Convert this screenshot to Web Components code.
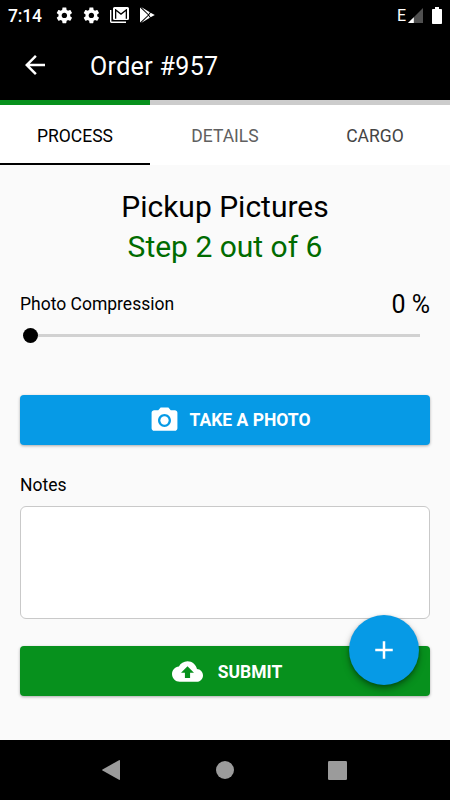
<!DOCTYPE html>
<html lang="en">
<head>
<meta charset="utf-8">
<title>Order #957</title>
<style>
html,body{margin:0;height:100%;background:#fafafa}
body{font-family:Roboto,"Liberation Sans",sans-serif;color:#000}
</style>
</head>
<body>
<order-screen></order-screen>
<script>
const define = (name, html, setup) => customElements.define(name, class extends HTMLElement {
  constructor() {
    super();
    this.attachShadow({ mode: 'open' }).innerHTML = html;
  }
  connectedCallback() { if (setup) setup(this, this.shadowRoot); }
});

const ICONS = {
  gear: ['0 0 24 24', '<path d="M19.43 12.98c.04-.32.07-.64.07-.98s-.03-.66-.07-.98l2.11-1.65c.19-.15.24-.42.12-.64l-2-3.46c-.12-.22-.39-.3-.61-.22l-2.49 1c-.52-.4-1.08-.73-1.69-.98l-.38-2.65C14.46 2.18 14.25 2 14 2h-4c-.25 0-.46.18-.49.42l-.38 2.65c-.61.25-1.17.59-1.69.98l-2.49-1c-.23-.09-.49 0-.61.22l-2 3.46c-.13.22-.07.49.12.64l2.11 1.65c-.04.32-.07.65-.07.98s.03.66.07.98l-2.11 1.65c-.19.15-.24.42-.12.64l2 3.46c.12.22.39.3.61.22l2.49-1c.52.4 1.08.73 1.69.98l.38 2.65c.03.24.24.42.49.42h4c.25 0 .46-.18.49-.42l.38-2.65c.61-.25 1.17-.59 1.69-.98l2.49 1c.23.09.49 0 .61-.22l2-3.46c.12-.22.07-.49-.12-.64l-2.11-1.65zM12 15.5c-1.93 0-3.5-1.57-3.5-3.5s1.57-3.5 3.5-3.5 3.5 1.57 3.5 3.5-1.57 3.5-3.5 3.5z"/>'],
  mail: ['0 0 20 16', '<path d="M0 3h1.4v11.6H16V16H1.4Q0 16 0 14.6z"/><path fill-rule="evenodd" d="M4.500 0h13Q19 0 19 1.500v10.300q0 1.300-1.500 1.300h-13Q3 13.100 3 11.800V1.500Q3 0 4.500 0zM5 2v9.700h1.300V4.200L11 8l4.700-3.800v7.500H17V2h-.6L11 6.200 5.600 2z"/>'],
  play: ['0 0 15 16', '<path d="M0 .4 8 8 0 15.600z"/><path d="M1.100 0 9.900 5.200 8.500 7.200zM1.100 16l8.800-5.200-1.400-2zM10.600 5.800 14.800 8l-4.200 2.200L9.100 8z"/>'],
  signal: ['0 0 15 15', '<path d="M0 15 15 0v15z" fill="#505050"/><path d="M0 15 5.800 9.200V15z"/>'],
  battery: ['0 0 10 17', '<path d="M3 0h4v2h2.200q.8 0 .8.800v13.400q0 .8-.8.800H.8Q0 17 0 16.200V2.800Q0 2 .8 2H3z"/>'],
  back: ['0 0 24 24', '<path d="M20 11H7.830l5.590-5.590L12 4l-8 8 8 8 1.410-1.410L7.830 13H20v-2z"/>'],
  camera: ['0 0 24 24', '<circle cx="12" cy="12" r="3.200"/><path d="M9 2 7.170 4H4c-1.100 0-2 .9-2 2v12c0 1.100.9 2 2 2h16c1.100 0 2-.9 2-2V6c0-1.100-.9-2-2-2h-3.170L15 2H9zm3 15c-2.760 0-5-2.240-5-5s2.240-5 5-5 5 2.240 5 5-2.240 5-5 5z"/>'],
  upload: ['0 0 24 24', '<path d="M19.350 10.040C18.670 6.590 15.640 4 12 4 9.110 4 6.600 5.640 5.350 8.040 2.340 8.360 0 10.910 0 14c0 3.310 2.690 6 6 6h13c2.760 0 5-2.240 5-5 0-2.640-2.050-4.780-4.650-4.960zM14 13v4h-4v-4H7l5-5 5 5h-3z"/>'],
  plus: ['0 0 24 24', '<path d="M19 13h-6v6h-2v-6H5v-2h6V5h2v6h6v2z"/>'],
  navBack: ['0 0 18 20', '<path d="M17 .2q1-.5 1 .6v18.400q0 1.100-1 .6L.5 10.500q-.8-.5 0-1z"/>'],
  navHome: ['0 0 18 18', '<circle cx="9" cy="9" r="9"/>'],
  navRecent: ['0 0 19 19', '<rect width="19" height="19" rx="1.300"/>']
};

define('ui-icon', `<style>
  :host{display:block;flex:none}
  svg{display:block;width:100%;height:100%;fill:currentColor}
</style><svg></svg>`, (el, root) => {
  const [box, shapes] = ICONS[el.getAttribute('name')];
  const svg = root.querySelector('svg');
  svg.setAttribute('viewBox', box);
  svg.innerHTML = shapes;
});

define('status-bar', `<style>
  :host{display:flex;height:30px;box-sizing:border-box;padding:0 8px 0 8px;align-items:center;justify-content:space-between;background:#000;color:#fff}
  div{display:flex;align-items:center}
  .time{font-size:17.5px;font-weight:500;line-height:30px;width:44.500px;margin-right:2.500px;letter-spacing:-.15px;padding-top:1px}
  .gear{width:18.750px;height:18.750px;margin-right:8.600px}
  .mail{width:20px;height:16px;margin:0 9.900px 0 .1px}
  .play{width:15px;height:16px}
  .net{font-size:16px;width:8px;margin-right:3px}
  .signal{width:15px;height:15px;margin-right:9px}
  .battery{width:10px;height:17px}
</style>
<div><span class="time">7:14</span><ui-icon class="gear" name="gear"></ui-icon><ui-icon class="gear" name="gear"></ui-icon><ui-icon class="mail" name="mail"></ui-icon><ui-icon class="play" name="play"></ui-icon></div>
<div><span class="net">E</span><ui-icon class="signal" name="signal"></ui-icon><ui-icon class="battery" name="battery"></ui-icon></div>`);

define('app-bar', `<style>
  :host{display:flex;height:70px;align-items:center;padding-left:20px;background:#000;color:#fff}
  ui-icon{width:30px;height:30px;margin-right:40px}
  h1{margin:4px 0 0;font-size:25px;font-weight:400;line-height:30px;letter-spacing:.35px}
</style><ui-icon name="back"></ui-icon><h1><slot></slot></h1>`);

define('step-progress', `<style>
  :host{display:block;height:5px;background:#ccc}
  div{height:100%;background:#07911d}
</style><div></div>`, (el, root) => {
  root.querySelector('div').style.width = el.getAttribute('value') + '%';
});

define('tab-strip', `<style>
  :host{display:grid;grid-template-columns:repeat(3,1fr);height:60px;background:#fff}
</style><slot></slot>`);

define('tab-item', `<style>
  :host{display:flex;box-sizing:border-box;align-items:center;justify-content:center;padding-top:4px;font-size:17.5px;color:#606060;border-bottom:2px solid transparent}
  :host([selected]){color:#000;border-color:#000}
  :host([dark]){color:#444}
</style><slot></slot>`);

define('range-field', `<style>
  :host{display:block}
  header{display:flex;justify-content:space-between;align-items:center;height:32px}
  .label{font-size:17.5px}
  .value{font-size:25px}
  .slider{display:flex;align-items:center;height:15px;margin:8px 10px 0 3px}
  .thumb{width:15px;height:15px;border-radius:50%;background:#000}
  .track{flex:1;height:2.500px;background:#d1d1d1}
</style>
<header><span class="label"><slot></slot></span><span class="value"><slot name="value"></slot></span></header>
<div class="slider"><span class="thumb"></span><span class="track"></span></div>`);

define('notes-field', `<style>
  :host{display:block}
  label{display:block;font-size:17.5px;line-height:22px}
  textarea{display:block;box-sizing:border-box;width:100%;height:113px;margin:10px 0 0;border:1px solid #c9c9c9;border-radius:6px;background:#fff;resize:none;outline:0}
</style><label for="n"><slot></slot></label><textarea id="n"></textarea>`);

define('floating-button', `<style>
  :host{display:block}
  button{display:grid;place-items:center;width:70px;height:70px;padding:0;border:0;border-radius:50%;background:#069ae6;color:#fff;box-shadow:0 4px 7px rgba(0,0,0,.36),0 1px 3px rgba(0,0,0,.2)}
  ui-icon{width:30px;height:30px}
</style><button aria-label="Add"><ui-icon name="plus"></ui-icon></button>`);

define('icon-button', `<style>
  :host{display:block}
  button{display:flex;width:100%;height:50px;padding:0 0 0 var(--inset,0);align-items:center;justify-content:center;gap:var(--gap,10px);border:0;border-radius:4px;background:var(--fill);color:#fff;box-shadow:0 1px 3px rgba(0,0,0,.32)}
  .icon{width:31px;height:31px;flex:none;padding-top:1px}
  .text{font:700 17.5px Roboto,"Liberation Sans",sans-serif;padding-top:1px}
</style><button><span class="icon"></span><span class="text"><slot></slot></span></button>`, (el, root) => {
  root.querySelector('.icon').innerHTML = `<ui-icon name="${el.getAttribute('icon')}" style="height:31px"></ui-icon>`;
});

define('nav-bar', `<style>
  :host{display:flex;height:60px;background:#000;color:#9b9b9b;align-items:center;justify-content:space-between;box-sizing:border-box;padding:0 103px 0 102px}
  .b{width:18px;height:20px}.h{width:18px;height:18px;padding-left:1px}.r{width:19px;height:19px}
</style><ui-icon class="b" name="navBack"></ui-icon><ui-icon class="h" name="navHome"></ui-icon><ui-icon class="r" name="navRecent"></ui-icon>`);

define('order-screen', `<style>
  :host{display:flex;flex-direction:column;position:relative;width:450px;height:800px;background:#fafafa;overflow:hidden}
  main{flex:1;padding:22px 20px 0}
  h2{margin:0;text-align:center;font-size:30px;line-height:40px;font-weight:400}
  .step{color:#006b00}
  range-field{margin-top:21px}
  .photo{--fill:#069ae6;--inset:9px;margin-top:51.500px}
  notes-field{margin-top:29px}
  .submit{--fill:#07911d;--gap:15px;--inset:4px;margin-top:27.500px}
  floating-button{position:absolute;left:349px;top:615px}
</style>
<status-bar></status-bar>
<app-bar>Order #957</app-bar>
<step-progress value="33.333"></step-progress>
<tab-strip><tab-item selected>PROCESS</tab-item><tab-item>DETAILS</tab-item><tab-item dark>CARGO</tab-item></tab-strip>
<main>
  <h2>Pickup Pictures</h2>
  <h2 class="step">Step 2 out of 6</h2>
  <range-field>Photo Compression<span slot="value">0 %</span></range-field>
  <icon-button class="photo" icon="camera">TAKE A PHOTO</icon-button>
  <notes-field>Notes</notes-field>
  <icon-button class="submit" icon="upload">SUBMIT</icon-button>
</main>
<nav-bar></nav-bar>
<floating-button></floating-button>`);
</script>
</body>
</html>
